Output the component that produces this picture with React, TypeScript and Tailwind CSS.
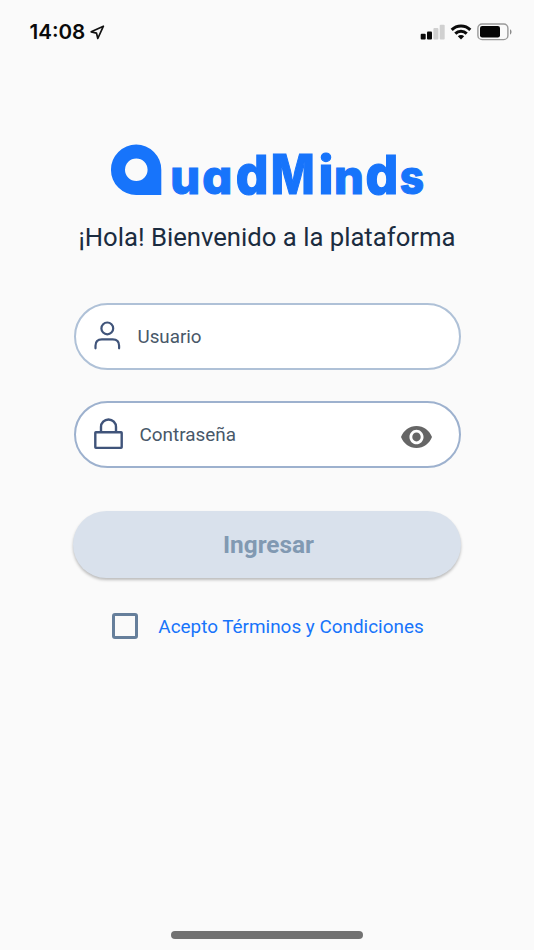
import React from "react";

function StatusBar() {
  return (
    <header className="flex h-[64px] w-full shrink-0 items-center pl-[29.5px] pr-[22px]">
      <span className="font-['Inter',sans-serif] text-[20.6px] leading-none font-semibold text-[#0a0a0a]">14:08</span>
      <svg className="ml-[5px]" width="15" height="15" viewBox="0 0 15 15" fill="none" stroke="#111" strokeWidth="1.7" strokeLinejoin="round">
        <path d="M13.4 1.2 1.2 6.8l5.3 1.3 1.3 5.4z" />
      </svg>
      <svg className="ml-auto" width="25" height="16" viewBox="0 0 25 16">
        <rect x="0.7" y="9.7" width="5" height="5.8" rx="1" fill="#0a0a0a" />
        <rect x="7" y="7.4" width="5" height="8.1" rx="1" fill="#0a0a0a" />
        <rect x="13.4" y="4" width="5" height="11.5" rx="1" fill="#d0d0d0" />
        <rect x="19.7" y="0.8" width="5" height="14.7" rx="1" fill="#d0d0d0" />
      </svg>
      <svg className="ml-[5px]" width="22" height="16" viewBox="0 0 22 16" fill="none" stroke="#0a0a0a" strokeWidth="3">
        <path d="M1.7 5.9a13.2 13.2 0 0 1 18.6 0" />
        <path d="M5.3 9.6a8.1 8.1 0 0 1 11.4 0" />
        <path d="m11 15.5-3.2-3.2a4.5 4.5 0 0 1 6.4 0z" fill="#0a0a0a" stroke="none" />
      </svg>
      <svg className="ml-[5px]" width="35" height="18" viewBox="0 0 35 18">
        <rect x="0.9" y="1" width="30" height="15.6" rx="4.2" fill="none" stroke="#999" strokeWidth="1.4" />
        <rect x="3" y="3.1" width="20" height="11.4" rx="2.2" fill="#050505" />
        <path d="M33 6.2v5.3c2-.7 2-4.6 0-5.3z" fill="#8c8c8c" />
      </svg>
    </header>
  );
}

function Logo() {
  return (
    <svg width="320" height="76" viewBox="109 136 320 76" fill="#1774fb" role="img">
      <path fillRule="evenodd" d="M136.2 144.5a25.1 25.2 0 0 1 25.1 25.2V195h-25.1a25.2 25.2 0 0 1 0-50.5zm.1 14a11.3 11.3 0 1 0 0 22.6 11.3 11.3 0 0 0 0-22.6z" />
      <g className="font-['Inter',sans-serif] font-extrabold [font-feature-settings:'cv11']" stroke="#1774fb" strokeWidth="1.2">
        <text y="194.4">
          <tspan x="170.2" fontSize="47">u</tspan>
          <tspan x="202.2" fontSize="47">a</tspan>
        </text>
        <text transform="translate(235.8 194.4) scale(0.96 1)" fontSize="53.5">d</text>
        <text transform="translate(270.8 194.4) scale(0.84 1)" fontSize="55.5">M</text>
        <text y="194.4">
          <tspan x="318.6" fontSize="53">i</tspan>
          <tspan x="333.9" fontSize="47">n</tspan>
        </text>
        <text transform="translate(365.6 194.4) scale(0.96 1)" fontSize="53.5">d</text>
        <text transform="translate(399.7 194.4) scale(0.9 1)" fontSize="47">s</text>
      </g>
    </svg>
  );
}

export default function App() {
  return (
    <main className="flex h-[950px] w-[534px] flex-col items-center overflow-hidden bg-[#fafafa] font-['Roboto',sans-serif]">
      <StatusBar />
      <div className="mt-[72px] ml-[4px] h-[76px]"><Logo /></div>
      <h1 className="mt-[7px] h-[36px] whitespace-nowrap text-[25.7px] leading-[36px] font-normal text-[#1b2c40]">¡Hola! Bienvenido a la plataforma</h1>
      <form className="flex w-[388px] flex-col items-center">
        <label className="mt-[48px] flex h-[67px] w-[387px] items-center rounded-full border-2 border-[#afc1d7] bg-white pl-[18px]">
          <svg className="-mt-[2px]" width="27" height="29" viewBox="0 0 27 29" fill="none" stroke="#40547a" strokeWidth="2.2" strokeLinecap="round">
            <circle cx="13.3" cy="7.4" r="5.9" />
            <path d="M1.5 27.3v-2.6c0-4 2.4-6.4 6.4-6.4h10.8c4 0 6.4 2.4 6.4 6.4v2.6" />
          </svg>
          <span className="mt-[1px] ml-[17px] text-[18.8px] text-[#485869]">Usuario</span>
        </label>
        <label className="mt-[31px] flex h-[67px] w-[387px] items-center rounded-full border-2 border-[#9db1ce] bg-white pr-[27px] pl-[18px]">
          <svg className="-mt-[2px]" width="29" height="32" viewBox="0 0 29 32" fill="none" stroke="#40547a" strokeWidth="2.4" strokeLinejoin="round">
            <rect x="1.3" y="14.2" width="26.4" height="15.7" rx="0.6" />
            <path d="M7 14V9a7.5 7.5 0 0 1 15 0v5" />
          </svg>
          <span className="mt-[1px] ml-[17px] text-[18.9px] text-[#485869]">Contraseña</span>
          <svg className="mt-[4px] ml-auto" width="31" height="22" viewBox="1 4.5 22 15" preserveAspectRatio="none" fill="#666">
            <path d="M12 4.5C7 4.5 2.73 7.61 1 12c1.73 4.39 6 7.5 11 7.5s9.27-3.11 11-7.5c-1.73-4.39-6-7.5-11-7.5M12 17c-2.76 0-5-2.24-5-5s2.24-5 5-5 5 2.24 5 5-2.24 5-5 5m0-8c-1.66 0-3 1.34-3 3s1.34 3 3 3 3-1.34 3-3-1.34-3-3-3" />
          </svg>
        </label>
        <button type="button" className="mt-[43px] h-[67px] w-[388px] rounded-full bg-[#d9e1ec] pt-[1px] pl-[3px] text-[24.4px] font-bold text-[#8199b2] shadow-[0_2px_3px_rgba(0,0,0,0.25)]">Ingresar</button>
        <label className="mt-[35px] ml-[2px] flex h-[26px] items-center">
          <span className="size-[26px] rounded-[3px] border-[3px] border-[#667f9b]" />
          <span className="mt-[2px] ml-[20px] whitespace-nowrap text-[18.9px] text-[#1774fb]">Acepto Términos y Condiciones</span>
        </label>
      </form>
      <div className="mt-auto mb-[11px] h-[8px] w-[192px] shrink-0 rounded-full bg-[#727272]" />
    </main>
  );
}
